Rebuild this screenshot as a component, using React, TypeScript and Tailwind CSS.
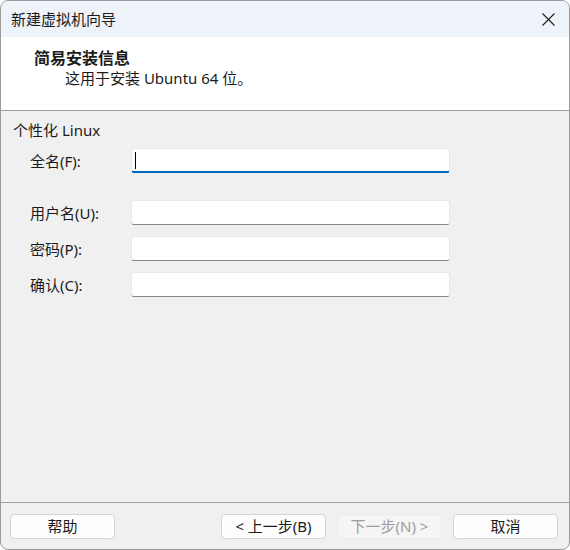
const FONT = { fontFamily: '"Segoe UI", "Noto Sans", "Noto Sans CJK SC", sans-serif' };

type Field = { label: string; focused?: boolean };

const FIELDS: Field[] = [
  { label: "用户名(U):" },
  { label: "密码(P):" },
  { label: "确认(C):" },
];

function TextBox({ focused }: { focused?: boolean }) {
  return (
    <div
      className={
        "relative h-[25px] w-[319px] rounded-[3px] border border-[#e8e8e8] bg-white " +
        (focused ? "border-b-2 border-b-[#0067c0]" : "border-b-[#868686]")
      }
    >
      {focused ? <div className="absolute left-[3px] top-[3px] h-[17px] w-px bg-black" /> : null}
    </div>
  );
}

function Row({ label, focused }: Field) {
  return (
    <div className="flex items-center">
      <span className="w-[118px] pl-[17px] text-[15px] leading-[20px]">{label}</span>
      <TextBox focused={focused} />
    </div>
  );
}

function Button({ children, disabled }: { children: string; disabled?: boolean }) {
  return (
    <button
      disabled={disabled}
      className={
        "flex h-[25px] w-[105px] items-center justify-center rounded-[4px] border text-[15px] leading-none " +
        (disabled
          ? "border-[#ececec] bg-[#f5f5f5] text-[#9d9d9d]"
          : "border-[#d4d4d4] bg-[#fdfdfd] text-[#1b1b1b]")
      }
    >
      {children}
    </button>
  );
}

export default function App() {
  return (
    <div
      style={FONT}
      className="flex h-[550px] w-[570px] flex-col overflow-hidden rounded-[8px] border border-[#9b9b9b] bg-[#f0f0f0] text-[#1b1b1b]"
    >
      <div className="flex h-[36px] shrink-0 items-center justify-between bg-[#eef2f9] pl-[10px] pr-[14px]">
        <span className="text-[15px] leading-[20px]">新建虚拟机向导</span>
        <svg width="13" height="13" viewBox="0 0 13 13" className="mt-px">
          <path d="M0.5 0.5 L12.5 12.5 M12.5 0.5 L0.5 12.5" stroke="#1b1b1b" strokeWidth="1.1" />
        </svg>
      </div>

      <div className="h-[74px] shrink-0 border-b border-[#a0a0a0] bg-white pl-[33px] pt-[11px]">
        <div className="text-[16px] font-bold leading-[20px]">简易安装信息</div>
        <div className="pl-[31px] text-[15px] leading-[21px]">这用于安装 Ubuntu 64 位。</div>
      </div>

      <div className="flex-1 pl-[12px] pt-[9px]">
        <div className="text-[15px] leading-[20px]">个性化 Linux</div>
        <div className="mt-[8px]">
          <Row label="全名(F):" focused />
        </div>
        <div className="mt-[27px] flex flex-col gap-[11px]">
          {FIELDS.map((f) => (
            <Row key={f.label} {...f} />
          ))}
        </div>
      </div>

      <div className="flex h-[47px] shrink-0 items-start justify-between border-t border-[#a0a0a0] pl-[9px] pr-[11px] pt-[11px]">
        <Button>帮助</Button>
        <div className="flex gap-[11px]">
          <Button>{"< 上一步(B)"}</Button>
          <Button disabled>{"下一步(N) >"}</Button>
          <Button>取消</Button>
        </div>
      </div>
    </div>
  );
}
